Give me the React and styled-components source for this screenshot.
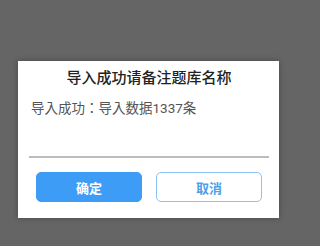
import React from "react";
import styled, { createGlobalStyle } from "styled-components";

const Global = createGlobalStyle`
  html, body { margin: 0; padding: 0; background: #656565; }
  body { font-family: Roboto, "Noto Sans CJK SC", sans-serif; }
`;

const Overlay = styled.div`
  width: 300px;
  height: 246px;
  box-sizing: border-box;
  padding: 61px 0 0 18px;
  background: #656565;
`;

const Dialog = styled.div`
  width: 261px;
  height: 157px;
  box-sizing: border-box;
  padding: 7px 10px 16px 11px;
  background: #fff;
  display: flex;
  flex-direction: column;
  box-shadow: 0 0 6px rgba(0, 0, 0, 0.3);
`;

const Title = styled.div`
  font-size: 15px;
  line-height: 20px;
  height: 20px;
  text-align: center;
  font-weight: 500;
  color: #222;
`;

const Message = styled.div`
  margin-top: 11px;
  padding-left: 2px;
  font-family: Roboto, "Noto Sans CJK JP", "Noto Sans CJK SC", sans-serif;
  font-size: 13.5px;
  line-height: 18px;
  color: #555;
`;

const Input = styled.input`
  display: block;
  height: 41px;
  width: 100%;
  box-sizing: border-box;
  border: none;
  border-bottom: 2px solid #bdbdbd;
  outline: none;
  background: transparent;
  padding: 0 3px;
  font: inherit;
  font-size: 13px;
`;

const Buttons = styled.div`
  margin-top: 14px;
  padding: 0 7px;
  display: flex;
  gap: 14px;
`;

const Button = styled.button`
  flex: 1;
  height: 30px;
  box-sizing: border-box;
  border-radius: 5px;
  font-family: inherit;
  font-size: 13px;
  font-weight: 700;
  border: 1.5px solid ${(p) => (p.$primary ? "#3d9cf6" : "#8cc2f2")};
  background: ${(p) => (p.$primary ? "#3d9cf6" : "#fff")};
  color: ${(p) => (p.$primary ? "#fff" : "#4d9fe8")};
  padding: 0;
`;

export default function App() {
  return (
    <>
      <Global />
      <Overlay>
        <Dialog>
          <Title>导入成功请备注题库名称</Title>
          <Message>导入成功：导入数据1337条</Message>
          <Input type="text" />
          <Buttons>
            <Button $primary>确定</Button>
            <Button>取消</Button>
          </Buttons>
        </Dialog>
      </Overlay>
    </>
  );
}
